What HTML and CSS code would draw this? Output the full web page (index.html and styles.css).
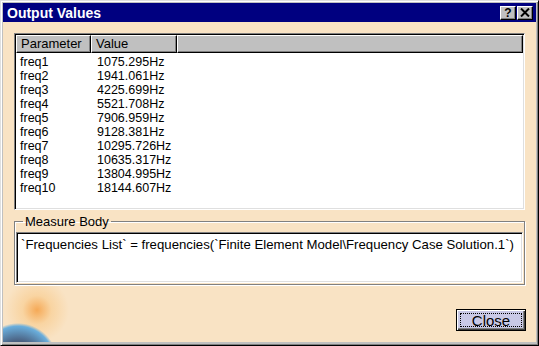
FILE: index.html
```html
<!DOCTYPE html>
<html lang="en">
<head>
  <meta charset="UTF-8" />
  <title>Output Values</title>
  <link rel="stylesheet" href="styles.css">
</head>
<body>

  <div class="window">
    <div class="title-bar">
      <div class="title">Output Values</div>
      <div class="title-buttons">
        <div class="title-btn">?</div>
        <div class="title-btn">
          <svg width="10" height="9" viewBox="0 0 10 9"><path d="M1 0.5 L9 8.5 M9 0.5 L1 8.5" stroke="#000" stroke-width="2"/></svg>
        </div>
      </div>
    </div>

    <div class="content">
      <div class="list-box">
        <div class="list-header">
          <div class="head-cell col-param">Parameter</div>
          <div class="head-cell col-value">Value</div>
          <div class="head-cell col-rest"></div>
        </div>
        <div class="list-rows" id="rows">
          <!-- rows -->
        </div>
      </div>

      <fieldset class="group">
        <legend>Measure Body</legend>
        <div class="text-field">`Frequencies List` = frequencies(`Finite Element Model\Frequency Case Solution.1`)</div>
      </fieldset>

      <div class="footer">
        <div class="close-button"><span class="focus">Close</span></div>
      </div>
    </div>
  </div>

  <script>
    const values = ['1075.295', '1941.061', '4225.699', '5521.708', '7906.959',
                    '9128.381', '10295.726', '10635.317', '13804.995', '18144.607'];
    const rows = document.getElementById('rows');
    values.forEach((v, i) => {
      const row = document.createElement('div');
      row.className = 'list-row';
      row.innerHTML = `<div class="col-param">freq${i + 1}</div><div class="col-value">${v}Hz</div>`;
      rows.appendChild(row);
    });
  </script>
</body>
</html>
```

FILE: styles.css
```css
body {
  margin: 0;
  font-family: "Liberation Sans", Arial, sans-serif;
  background-color: #c0c0c0;
}
.window {
  width: 539px;
  height: 346px;
  box-sizing: border-box;
  background-color: #c0c0c0;
  border: 1px solid;
  border-color: #dfdfdf #000 #000 #dfdfdf;
  box-shadow: inset 1px 1px #fff, inset -1px -1px #808080;
  padding: 2px 2px 3px 2px;
  display: flex;
  flex-direction: column;
}
.title-bar {
  height: 19px;
  background-color: #000080;
  display: flex;
  justify-content: space-between;
  align-items: center;
  padding: 0 3px 0 4px;
}
.title {
  color: #fff;
  font-weight: bold;
  font-size: 14px;
}
.title-buttons {
  display: flex;
  gap: 1px;
}
.title-btn {
  width: 14px;
  height: 12px;
  background-color: #c0c0c0;
  border: 1px solid;
  border-color: #fff #000 #000 #fff;
  box-shadow: inset -1px -1px #808080;
  font-size: 12px;
  font-weight: bold;
  line-height: 12px;
  text-align: center;
  display: flex;
  align-items: center;
  justify-content: center;
}
.content {
  flex: 1;
  background-color: #f9e3c4;
  background-image:
    radial-gradient(circle 40px at 15px 341px, #38404e 0, #4a6080 55%, #6aaedc 92%, rgba(120,190,230,0) 100%),
    radial-gradient(circle 32px at 34px 288px, rgba(244,150,50,0.75) 0, rgba(248,190,110,0.4) 45%, rgba(249,227,196,0) 100%);
  padding: 11px 11px 0 11px;
  display: flex;
  flex-direction: column;
}
.list-box {
  height: 177px;
  box-sizing: border-box;
  background-color: #fff;
  border: 1px solid;
  border-color: #808080 #fff #fff #808080;
  box-shadow: inset 1px 1px #000, inset -1px -1px #dfdfdf;
  padding: 1px;
}
.list-header {
  display: flex;
  height: 18px;
}
.head-cell {
  box-sizing: border-box;
  background-color: #c0c0c0;
  border: 1px solid;
  border-color: #fff #000 #000 #fff;
  box-shadow: inset -1px -1px #808080;
  font-size: 13px;
  line-height: 16px;
  padding-left: 4px;
  color: #000;
}
.head-cell.col-param {
  width: 75px;
}
.head-cell.col-value {
  width: 86px;
}
.head-cell.col-rest {
  flex: 1;
}
.list-rows {
  padding-top: 2px;
}
.list-row {
  display: flex;
  font-size: 12.5px;
  line-height: 14px;
  height: 14px;
  color: #000;
}
.list-row .col-param {
  width: 77px;
  padding-left: 4px;
}
.group {
  margin: 4px 0 0 0;
  padding: 0 1px 1px 1px;
  border: 1px solid #808080;
  box-shadow: 1px 1px #fff, inset 1px 1px #fff;
  min-width: 0;
}
.group legend {
  font-size: 13px;
  padding: 0 2px;
  margin-left: 7px;
  color: #000;
}
.text-field {
  margin-top: 3px;
  height: 45px;
  background-color: #fff;
  border: 1px solid;
  border-color: #808080 #fff #fff #808080;
  box-shadow: inset 1px 1px #000, inset -1px -1px #dfdfdf;
  font-size: 13.2px;
  padding: 4px 0 0 4px;
  white-space: nowrap;
  color: #000;
}
.footer {
  display: flex;
  justify-content: flex-end;
  margin-top: 24px;
}
.close-button {
  width: 70px;
  height: 22px;
  box-sizing: border-box;
  background-color: #c9c9e6;
  border: 1px solid #000;
  box-shadow: inset 1px 1px #fff, inset -1px -1px #404040, inset -2px -2px #808080;
  padding: 3px;
  margin-right: -1px;
}
.focus {
  display: block;
  height: 100%;
  box-sizing: border-box;
  border: 1px dotted #000;
  font-size: 15px;
  line-height: 13px;
  text-align: center;
  color: #000;
}
```
